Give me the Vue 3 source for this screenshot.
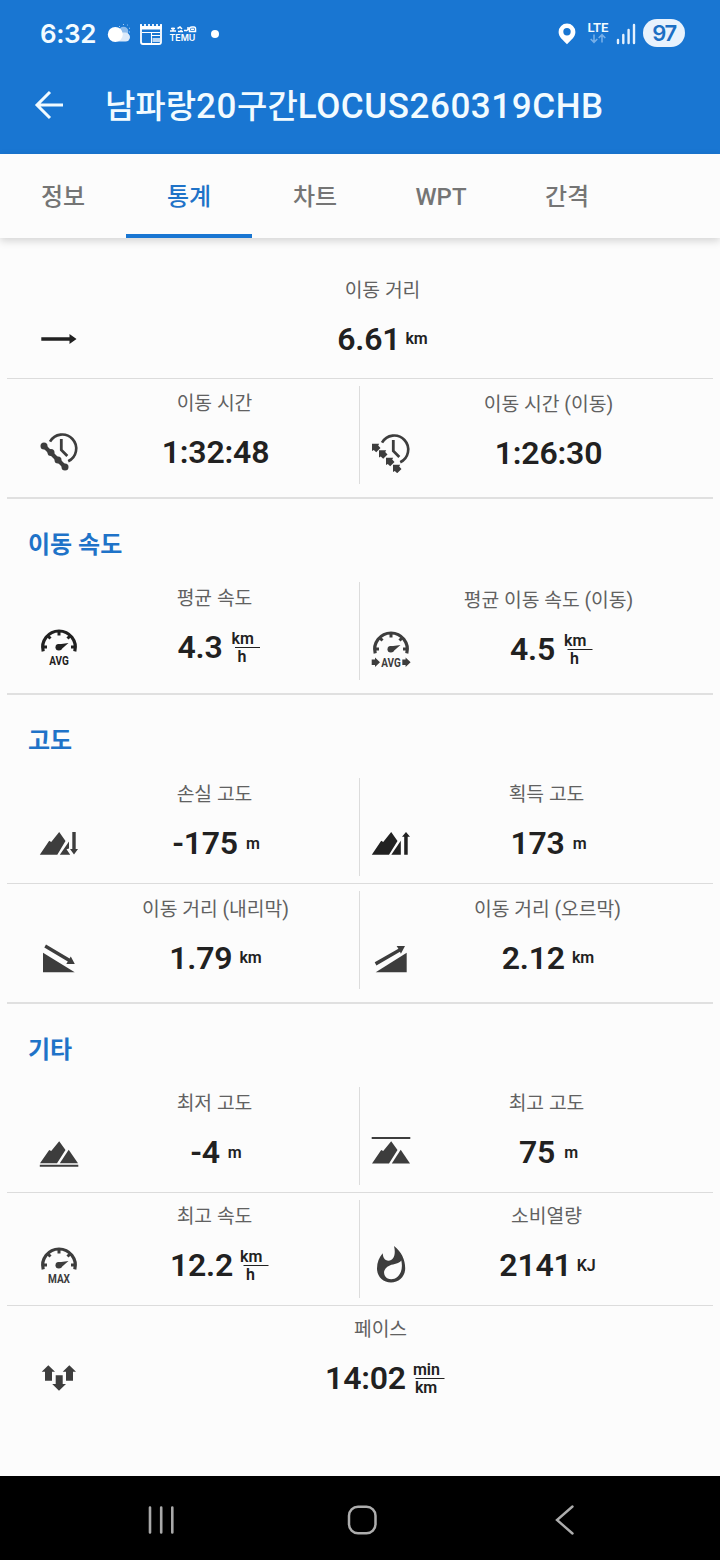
<script setup>
const titleParts = [
  { text: '남파랑', kind: 'hangul' },
  { text: '20', kind: 'latin' },
  { text: '구간', kind: 'hangul' },
  { text: 'LOCUS260319CHB', kind: 'latin' },
]
const tabs = ['정보', '통계', '차트', 'WPT', '간격']
const activeTab = 1

const sections = [
  {
    title: '',
    rows: [
      [{ label: '이동 거리', value: '6.61', unit: 'km', icon: 'distance', gap: 5, lower: 1, wide: true }],
      [
        { label: '이동 시간', value: '1:32:48', icon: 'time', shift: 1, lower: 1 },
        { label: '이동 시간 (이동)', value: '1:26:30', icon: 'timeMoving', drop: 1, shift: 1, lower: 1, labelShift: 1 },
      ],
    ],
  },
  {
    title: '이동 속도',
    rows: [
      [
        { label: '평균 속도', value: '4.3', unit: 'km', per: 'h', icon: 'speed', tag: 'AVG', gap: 9, shift: 4 },
        { label: '평균 이동 속도 (이동)', value: '4.5', unit: 'km', per: 'h', icon: 'speed', tag: 'AVG', arrows: true, gap: 9, shift: 3.5, drop: 2, labelShift: 1 },
      ],
    ],
  },
  {
    title: '고도',
    rows: [
      [
        { label: '손실 고도', value: '-175', unit: 'm', icon: 'loss', gap: 8, shift: 1.5 },
        { label: '획득 고도', value: '173', unit: 'm', icon: 'gain', gap: 8, shift: 1, labelShift: -1 },
      ],
      [
        { label: '이동 거리 (내리막)', value: '1.79', unit: 'km', icon: 'downhill', gap: 7, shift: 1, drop: 1, lower: 1, labelShift: 1 },
        { label: '이동 거리 (오르막)', value: '2.12', unit: 'km', icon: 'uphill', gap: 7, shift: 0.5, drop: 1, lower: 1 },
      ],
    ],
  },
  {
    title: '기타',
    rows: [
      [
        { label: '최저 고도', value: '-4', unit: 'm', icon: 'lowest', gap: 8, shift: 1.5 },
        { label: '최고 고도', value: '75', unit: 'm', icon: 'highest', gap: 9, shift: 1, labelShift: -1 },
      ],
      [
        { label: '최고 속도', value: '12.2', unit: 'km', per: 'h', icon: 'speed', tag: 'MAX', gap: 7, shift: 4.5 },
        { label: '소비열량', value: '2141', unit: 'KJ', icon: 'energy', gap: 5, labelShift: -1 },
      ],
      [{ label: '페이스', value: '14:02', unit: 'min', per: 'km', icon: 'pace', gap: 7, shift: 2.5, labelShift: -2, wide: true }],
    ],
  },
]

const shapes = {
  distance: ['M2.300 18.200H30.500V15L37.500 20L30.500 25V21.800H2.300Z'],
  loss: [
    'M.8 30.8L10.2 16.7L12.2 18L20.2 8L26.5 17L18.3 30.8Z',
    'M20.8 30.8L30 17.5V24.5L27.5 25.2L31.2 30.8Z',
    'M33.3 8H36.7V25H39L35 30.5L31 25H33.3Z',
  ],
  gain: [
    'M.8 30.8L10.2 16.7L12.2 18L20.2 8L26.5 17L18 30.8Z',
    'M20.3 30.8L29.8 16.7V30.8Z',
    'M33.2 30.8V12.8H31L35 8L39 12.8H36.7V30.8Z',
  ],
  downhill: ['M4 14.7V34.3H35.7Z', 'M7 6.5L30.6 20.4L31.8 18.6L35.8 26H27.3L28.8 23.4L5.3 9.6Z'],
  uphill: ['M4.7 34.3L35.7 14.7V34.3Z', 'M3.7 24.3L27.4 10.7L25.6 8.1H34L29.9 15.8L29 13.8L5.4 27.4Z'],
  lowest: [
    'M1 30.3L10.2 17L12.2 18L20.2 8.2L26.5 17L18 30.3Z',
    'M20.8 30.3L29.7 16.8L39 30.3Z',
    'M.8 31.8H39.3V33.7H.8Z',
  ],
  highest: [
    'M1 30.5L10.2 17L12.2 18L20.2 8.2L26.5 17L18 30.5Z',
    'M20.8 30.5L29.7 16.8L39 30.5Z',
    'M.7 4.1H39.3V6H.7Z',
  ],
  energy: [
    'M23 0C30.5 5.5 34.2 14 34.2 22.2C34.2 30.6 28 36.5 20 36.5C12 36.5 6 30.6 6 22.4C6 16.3 8.2 11.4 11.7 7.3C12 11.7 13.6 14.7 17.5 14.7C22.5 14.7 25.2 9 23 0ZM30.300 14.500C28.500 17.500 23 17.800 18.800 19.400C13 21.700 12 26.500 14 30C16.500 34 22.500 34.200 26.300 31C30.500 27.300 31.800 21.500 30.300 14.500Z',
  ],
  pace: [
    'M9.3 6.2L16 12.8H13V21.8H6V12.8H2.7Z',
    'M30.3 6.2L37 12.8H34V21.8H27V12.8H23.7Z',
    'M16.7 16.2H23.7V25H27L20 31.8L13.2 25H16.7Z',
  ],
}

const beads = [[5, 14], [12, 20.5], [19, 28], [26, 35]]
const darkIcons = ['distance', 'gain']
const isDark = (c) => darkIcons.includes(c.icon) || (c.tag === 'AVG' && !c.arrows)
const place = (c) => ({
  '--gap': `${c.gap || 0}px`,
  '--shift': `${c.shift || 0}px`,
  '--label': `${c.labelShift || 0}px`,
  '--lower': `${c.lower || 0}px`,
})
</script>

<template>
  <div class="screen">
    <header class="top">
      <div class="status">
        <span class="clock">6:32</span>
        <svg class="weather" width="24" height="20" viewBox="0 0 24 20">
          <circle cx="16.5" cy="7.5" r="4.8" fill="#8fbcec" />
          <path d="M12 2L13 3M16.5 0V1M20 1.5L20.8 .8M22 4.5L23 4M22 8H23" stroke="#a9cdf2" stroke-width="1" />
          <rect x="8" y="8.6" width="15" height="9" rx="4.5" fill="#dceafa" />
          <circle cx="8.3" cy="10.4" r="7.5" fill="#fff" />
        </svg>
        <svg class="news" width="22" height="22" viewBox="0 0 22 22">
          <path d="M1 2V19Q1 21 3 21H19Q21 21 21 19V2" fill="none" stroke="#fff" stroke-width="1.8" />
          <path d="M.2 3H21.800V6.500H.2Z" fill="#fff" />
          <path d="M1 1V3M5 1V3M9 1V3M13 1V3M17 1V3M21 1V3" stroke="#fff" stroke-width="1.800" />
          <path d="M2 9.500H20M11.500 9.500V20M12 12.500H20" stroke="#fff" stroke-width="1.100" />
          <path d="M12.500 15H20V19H12.500Z" fill="#bcd8f5" />
        </svg>
        <svg class="temu" width="28" height="16" viewBox="0 0 28 16">
          <path d="M1 5H7M4 1.500V5M2 2.500H6M8.500 2.500L11 1L13 3M9 5.500H14M12 4V5.500M15 4.500H17M19 1V3.500L17 5M20.500 5.500V3Q20.500 1 23 1H25Q26.500 1 26.500 3V5.500ZM22 3.300H25" fill="none" stroke="#fff" stroke-width="1.500" />
          <text x=".4" y="14.500" class="temu-text" textLength="26" lengthAdjust="spacingAndGlyphs">TEMU</text>
        </svg>
        <i class="dot"></i>
        <span class="grow"></span>
        <svg class="pin" width="18" height="22" viewBox="0 0 18 22">
          <path fill-rule="evenodd" d="M9 .5A8.400 8.400 0 0 0 .6 8.900C.6 14 5 16.800 9 21.200C13 16.800 17.400 14 17.400 8.900A8.400 8.400 0 0 0 9 .5ZM9 5A3.700 3.700 0 1 1 9 12.400A3.700 3.700 0 0 1 9 5Z" fill="#fff" />
        </svg>
        <svg class="lte" width="24" height="32" viewBox="0 0 24 32">
          <text x=".5" y="14" class="lte-text" textLength="21" lengthAdjust="spacingAndGlyphs">LTE</text>
          <path d="M7 16.500V24M3.700 21L7 24.300L10.300 21M15 24.500V17M11.700 20L15 16.700L18.300 20" fill="none" stroke="#75aee8" stroke-width="1.600" />
        </svg>
        <svg class="signal" width="20" height="22" viewBox="0 0 20 22">
          <path d="M2 17V20M7.300 12V20M12.600 7V20M18 2V20" stroke="#e6f1fd" stroke-width="2.400" stroke-linecap="round" />
        </svg>
        <span class="battery">97</span>
      </div>
      <div class="bar">
        <svg class="back" width="30" height="30" viewBox="0 0 30 30">
          <path d="M29 15H3M16 2L3 15L16 28" fill="none" stroke="#f0faff" stroke-width="3" />
        </svg>
        <h1><span v-for="p in titleParts" :key="p.text" :class="p.kind">{{ p.text }}</span></h1>
      </div>
    </header>

    <nav class="tabs">
      <div v-for="(t, i) in tabs" :key="t" class="tab" :class="{ active: i === activeTab }">{{ t }}</div>
    </nav>

    <main>
      <section v-for="(s, si) in sections" :key="si">
        <h2 v-if="s.title">{{ s.title }}</h2>
        <div v-for="(row, ri) in s.rows" :key="ri" class="row">
          <div
            v-for="c in row"
            :key="c.label"
            class="cell"
            :class="[{ wide: c.wide }, c.drop ? 'drop' + c.drop : '']"
          >
            <svg class="icon" :class="{ dark: isDark(c) }" width="40" height="40" viewBox="0 0 40 40">
              <template v-if="c.icon === 'speed'">
                <path class="line" d="M4.200 23.300A16.300 16.300 0 1 1 35.800 23.300" stroke-width="3.200" />
                <path class="line" d="M4.500 19H8M35.500 19H32M20 3V7.500M8.700 7.700L11.500 10.500M31.300 7.700L28.500 10.500" stroke-width="3" />
                <circle cx="19.800" cy="19.200" r="3.300" />
                <path d="M18.500 16.600L29.500 14.900L21.500 22Z" />
                <text :x="c.tag === 'MAX' ? 9 : 10.200" y="36.700" class="tag" :textLength="c.tag === 'MAX' ? 22 : 19.600" lengthAdjust="spacingAndGlyphs">{{ c.tag }}</text>
                <path v-if="c.arrows" d="M.7 29.500H4V27.600L9 32.300L4 37V35H.7ZM31.300 29.500H34.600V27.600L39.600 32.300L34.600 37V35H31.300Z" />
              </template>
              <template v-else-if="c.icon === 'time' || c.icon === 'timeMoving'">
                <path class="line" d="M11 9.700A14 14 0 1 1 29.200 29.200" stroke-width="2.600" />
                <path class="line" d="M22.300 7V18L28.300 24" stroke-width="2.800" />
                <template v-if="c.icon === 'time'">
                  <path class="line" d="M5 14L26 35" stroke-width="4" />
                  <circle v-for="b in beads" :key="b[0]" :cx="b[0]" :cy="b[1]" r="3.500" />
                </template>
                <template v-else>
                  <path v-for="b in beads" :key="b[0]" :transform="`translate(${b[0]} ${b[1] + 0.7})`" d="M-4-4H3.200L2.200-2.300L4.500 .2L.2 4.500L-2.200 2.200L-4 3.200Z" />
                </template>
              </template>
              <path v-for="(d, k) in shapes[c.icon] || []" v-else :key="k" :d="d" fill-rule="evenodd" />
            </svg>
            <div class="data" :style="place(c)">
              <div class="label">{{ c.label }}</div>
              <div class="reading">
                <span class="value">{{ c.value }}</span>
                <span v-if="c.per" class="fraction" :class="{ long: c.unit === 'min' }">
                  <span>{{ c.unit }}</span>
                  <i></i>
                  <span class="under">{{ c.per }}</span>
                </span>
                <span v-else-if="c.unit" class="unit">{{ c.unit }}</span>
              </div>
            </div>
          </div>
        </div>
      </section>
    </main>

    <footer class="system">
      <svg width="30" height="32" viewBox="0 0 30 32">
        <path d="M4 3.500V28.500M15.200 3.500V28.500M26.300 3.500V28.500" stroke="#a9a9a9" stroke-width="2.600" stroke-linecap="round" />
      </svg>
      <svg class="home" width="32" height="32" viewBox="0 0 32 32">
        <rect x="3" y="2.800" width="26.500" height="26.500" rx="9" fill="none" stroke="#adadad" stroke-width="2.500" />
      </svg>
      <svg width="24" height="32" viewBox="0 0 24 32">
        <path d="M20.500 2.500L5 16L20.500 29.500" fill="none" stroke="#adadad" stroke-width="2.400" stroke-linecap="round" />
      </svg>
    </footer>
  </div>
</template>

<style>
body {
  margin: 0;
}
</style>

<style scoped>
.screen {
  width: 720px;
  height: 1560px;
  display: flex;
  flex-direction: column;
  background: #fcfcfc;
  color: #212121;
  font-family: Roboto, "Noto Sans CJK KR", sans-serif;
  overflow: hidden;
}
.top {
  height: 154px;
  background: #1976d2;
  color: #f2fbff;
}
.status {
  display: flex;
  align-items: center;
  height: 68px;
  padding: 0 35px 0 40px;
}
.clock {
  width: 57px;
  font: 600 26px/30px Inter, sans-serif;
  letter-spacing: -0.4px;
  white-space: nowrap;
}
.weather {
  margin-left: 10px;
}
.news {
  margin-left: 9px;
}
.temu {
  margin-left: 7px;
}
.temu-text {
  font: 600 8.500px Inter, sans-serif;
  fill: #fff;
}
.dot {
  width: 8px;
  height: 8px;
  margin-left: 14px;
  border-radius: 50%;
  background: #fff;
}
.grow {
  flex: 1;
}
.pin {
  margin-right: 1px;
}
.lte {
  margin: 0 5px 0 10px;
}
.lte-text {
  font: 600 13px Roboto, sans-serif;
  fill: #f2fbff;
}
.battery {
  width: 42px;
  height: 28px;
  margin-left: 7px;
  border-radius: 14px;
  background: #e8f2fd;
  color: #1c6fc4;
  font: 600 22px/29px Inter, sans-serif;
  letter-spacing: -1.5px;
  text-align: center;
  position: relative;
  top: -1px;
}
.bar {
  display: flex;
  align-items: center;
  height: 74px;
  padding-left: 34px;
}
h1 {
  margin: 4px 0 0 41px;
  font-size: 35px;
  line-height: 50px;
  font-weight: 500;
  white-space: nowrap;
}
.hangul {
  font-size: 33px;
}
.latin {
  letter-spacing: 0.57px;
}
.tabs {
  display: flex;
  height: 84px;
  flex: none;
  box-shadow: 0 3px 8px rgba(0, 0, 0, 0.16);
  background: #fcfcfc;
}
.tab {
  width: 126px;
  box-sizing: border-box;
  border-bottom: 4px solid transparent;
  text-align: center;
  color: #757575;
  font-size: 24px;
  line-height: 87px;
  height: 84px;
  font-weight: 500;
}
.tab.active {
  color: #1f73c8;
  border-color: #1976d2;
}
main {
  flex: 1;
  padding-top: 28px;
}
section {
  margin: 0 7px;
  padding-bottom: 6px;
  border-bottom: 2px solid #e0e0e0;
}
section:last-child {
  border-bottom: 0;
}
h2 {
  height: 76px;
  margin: 0 0 0 21px;
  color: #1f73c8;
  font-size: 24px;
  line-height: 92px;
  font-weight: 700;
}
.row {
  display: grid;
  grid-template-columns: 353px 353px;
  height: 112px;
}
.row + .row {
  border-top: 1px solid #dcdcdc;
}
.cell {
  display: flex;
  box-sizing: border-box;
  height: 98px;
  margin-top: 7px;
  padding: 0 9px 0 32px;
  border-right: 1px solid #dcdcdc;
}
.cell + .cell {
  padding: 0 29px 0 11px;
  border-right: 0;
}
.cell.wide {
  grid-column: 1 / 3;
  padding-right: 27px;
  border-right: 0;
}
.icon {
  flex: none;
  margin-top: 46px;
  fill: #3d3d3d;
  stroke: none;
}
.icon.dark {
  fill: #212121;
}
.line {
  fill: none;
  stroke: #3d3d3d;
}
.dark .line {
  stroke: #212121;
}
.tag {
  font: 700 12px Roboto, sans-serif;
}
.data {
  flex: 1;
  display: flex;
  flex-direction: column;
  align-items: center;
}
.label {
  height: 32px;
  line-height: 34px;
  font-size: 19.3px;
  color: #616161;
  white-space: nowrap;
  transform: translate(var(--label), var(--lower));
}
.reading {
  display: flex;
  align-items: center;
  height: 40px;
  margin-top: 14px;
  gap: var(--gap);
  transform: translateX(var(--shift));
}
.value {
  font-size: 32px;
  line-height: 38px;
  padding-bottom: 2px;
  font-weight: 600;
  letter-spacing: -0.2px;
  transform: translateY(var(--lower));
}
.unit {
  font-size: 16px;
  line-height: 20px;
  font-weight: 600;
}
.fraction {
  display: flex;
  flex-direction: column;
  width: 28px;
  font-size: 16px;
  line-height: 18px;
  font-weight: 600;
}
.fraction i {
  height: 1px;
  margin: -1px 0 0 3px;
  background: #212121;
}
.fraction .under {
  padding-left: 6px;
}
.fraction.long {
  width: 32px;
}
.fraction.long .under {
  padding-left: 2px;
}
.drop1 .icon,
.drop1 .data {
  position: relative;
  top: 1px;
}
.drop2 .icon,
.drop2 .data {
  position: relative;
  top: 2px;
}
.system {
  display: flex;
  align-items: center;
  box-sizing: border-box;
  height: 84px;
  background: #000;
  padding: 3px 144px 0 146px;
  justify-content: space-between;
}
.home {
  margin-right: 4px;
}
</style>
